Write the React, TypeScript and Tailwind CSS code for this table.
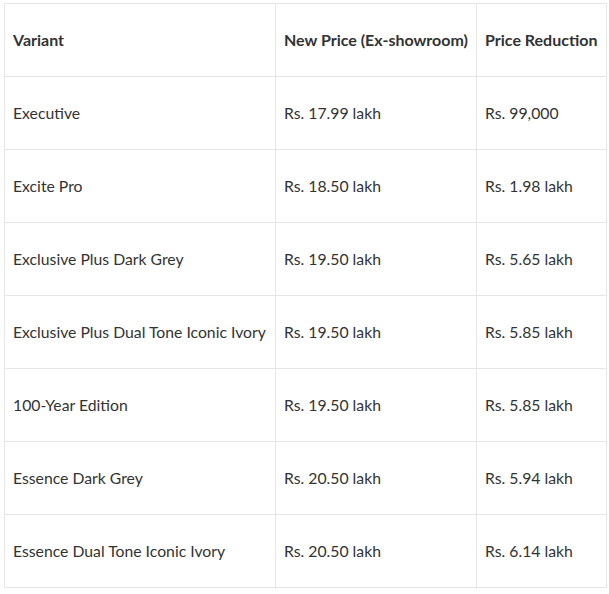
import React from 'react';

const rows: [string, string, string][] = [
  ['Executive', 'Rs. 17.99 lakh', 'Rs. 99,000'],
  ['Excite Pro', 'Rs. 18.50 lakh', 'Rs. 1.98 lakh'],
  ['Exclusive Plus Dark Grey', 'Rs. 19.50 lakh', 'Rs. 5.65 lakh'],
  ['Exclusive Plus Dual Tone Iconic Ivory', 'Rs. 19.50 lakh', 'Rs. 5.85 lakh'],
  ['100-Year Edition', 'Rs. 19.50 lakh', 'Rs. 5.85 lakh'],
  ['Essence Dark Grey', 'Rs. 20.50 lakh', 'Rs. 5.94 lakh'],
  ['Essence Dual Tone Iconic Ivory', 'Rs. 20.50 lakh', 'Rs. 6.14 lakh'],
];

export default function App() {
  return (
    <div className="min-h-screen bg-white pl-[4px] pt-[3px] font-['Lato',sans-serif] text-[15.75px] text-[#333]">
      <table className="w-[602px] table-fixed border-collapse whitespace-nowrap">
        <colgroup>
          <col className="w-[271px]" />
          <col className="w-[201px]" />
          <col className="w-[130px]" />
        </colgroup>
        <thead>
          <tr className="h-[73px] text-[16px]">
            <th className="border border-[#e6e6e6] px-2 text-left align-middle font-bold">Variant</th>
            <th className="border border-[#e6e6e6] px-2 text-left align-middle font-bold">New Price (Ex-showroom)</th>
            <th className="border border-[#e6e6e6] px-2 text-left align-middle font-bold">Price Reduction</th>
          </tr>
        </thead>
        <tbody>
          {rows.map(([variant, price, cut]) => (
            <tr key={variant} className="h-[73px]">
              <td className="border border-[#e6e6e6] px-2 align-middle">{variant}</td>
              <td className="border border-[#e6e6e6] px-2 align-middle">{price}</td>
              <td className="border border-[#e6e6e6] px-2 align-middle">{cut}</td>
            </tr>
          ))}
        </tbody>
      </table>
    </div>
  );
}
